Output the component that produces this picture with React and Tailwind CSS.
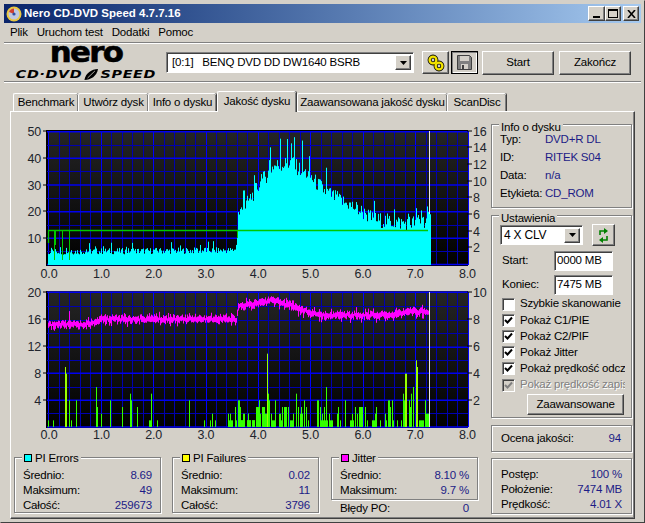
import React from "react";

const rnd = (i) => {
  const x = Math.sin(i * 12.9898) * 43758.5453;
  return x - Math.floor(x);
};

// envelope points, [pixel x, value]
const lerp = (pts, x) => {
  for (let i = 1; i < pts.length; i++) {
    if (x <= pts[i][0]) {
      const [a, b] = pts[i - 1];
      const [c, d] = pts[i];
      return b + ((d - b) * (x - a)) / (c - a);
    }
  }
  return pts[pts.length - 1][1];
};

const pieEnvelope = [
  [48, 5], [236, 5.5], [238, 19], [245, 22], [257, 29], [273, 37], [290, 38], [307, 34], [323, 28],
  [340, 24], [357, 21], [373, 17], [407, 15.5], [430, 17],
];

const jitterEnvelope = [
  [48, 325], [90, 324], [100, 319], [236, 319], [238, 306], [250, 304], [273, 300], [290, 305], [307, 312],
  [323, 315], [373, 315], [390, 315], [407, 311], [430, 312],
];

const left8 = [
  [85, 20], [100, 20], [136, 180], [139, 160], [148, 80], [154, 20], [169, 80], [229, 120], [232, 60], [244, 40],
  [271, 80], [307, 60], [331, 100], [334, 80], [352, 60], [388, 20], [391, 20], [394, 100], [412, 20], [508, 80],
  [553, 20], [571, 20], [577, 40], [586, 20], [625, 40], [628, 20], [631, 40], [634, 20], [637, 20], [646, 60],
  [649, 20], [655, 80], [658, 80], [661, 60], [664, 20], [667, 20], [670, 20], [673, 40], [682, 20], [685, 40],
  [688, 20], [691, 20], [697, 20], [700, 20], [703, 20], [709, 60], [712, 60], [718, 80],
];

const right9 = [
  [0, 20], [3, 20], [6, 20], [9, 40], [21, 20], [24, 40], [27, 20], [30, 20], [36, 20], [39, 20], [42, 20], [48, 60],
  [51, 60], [54, 60], [57, 80], [60, 40], [66, 60], [69, 60], [72, 60], [75, 40], [78, 40], [81, 220], [84, 100],
  [87, 80], [93, 40], [96, 20], [99, 20], [102, 20], [105, 80], [117, 40], [120, 40], [123, 20], [126, 60], [132, 60],
  [135, 60], [138, 60], [144, 60], [150, 20], [153, 20], [156, 20], [160, 40], [169, 100], [175, 60], [180, 40],
  [184, 60], [187, 40], [193, 80], [198, 60], [204, 20], [231, 80], [235, 80], [240, 60], [243, 20], [246, 40],
  [249, 20], [252, 60], [255, 20], [259, 120], [262, 20], [268, 40], [271, 20], [274, 20], [277, 20], [292, 40],
  [295, 60], [301, 20], [316, 80], [331, 20], [334, 20], [337, 40], [340, 20], [346, 60], [352, 40], [358, 60],
  [361, 60], [364, 60], [367, 60], [376, 60], [382, 20], [397, 20], [400, 20], [403, 20], [406, 40], [409, 60],
  [420, 20], [436, 40], [439, 20], [445, 80], [448, 80], [450, 60], [455, 80], [460, 20], [470, 20], [484, 20],
  [490, 100], [493, 80], [496, 160], [499, 160], [508, 80], [511, 60], [514, 100], [520, 120], [529, 200], [532, 180],
  [538, 20], [541, 20], [544, 20], [547, 20], [550, 20], [556, 80], [559, 40], [562, 40], [565, 40], [568, 40],
];

const pifBars = [
  ...left8.map(([x, h]) => [Math.round(20 + x / 3), h / 3]),
  ...right9.map(([x, h]) => [Math.round(240 + x / 3), h / 3]),
];

function Grid({ lines, top, bottom }) {
  const verticals = [];
  for (let i = 0; i <= 40; i++) {
    const x = Math.round(48.3 + i * 10.48) + 0.5;
    verticals.push(
      <line key={i} x1={x} x2={x} y1={top} y2={bottom} stroke={i % 5 === 0 ? "#0000ff" : "#0000b0"} strokeWidth="1" />
    );
  }
  return (
    <g>
      {verticals}
      {lines.map(([y, major]) => (
        <line key={y} x1="47" x2="468" y1={y} y2={y} stroke={major ? "#0000f0" : "#0000b0"} strokeWidth={major ? 1.5 : 1} />
      ))}
    </g>
  );
}

function Labels({ left, right, xLabelY }) {
  const xs = ["0.0", "1.0", "2.0", "3.0", "4.0", "5.0", "6.0", "7.0", "8.0"];
  return (
    <g fontFamily="'Liberation Sans', sans-serif" fontSize="12.5" fill="#20242c">
      {left.map(([t, y]) => (
        <g key={t}>
          <text x="41" y={y + 4.5} textAnchor="end">{t}</text>
          <line x1="43" x2="47" y1={y} y2={y} stroke="#000" />
        </g>
      ))}
      {right.map(([t, y]) => (
        <g key={t}>
          <text x="473" y={y + 4.5}>{t}</text>
          <line x1="467" x2="472" y1={y} y2={y} stroke="#000" />
        </g>
      ))}
      {xs.map((t, i) => (
        <text key={t} x={49 + i * 52.3} y={xLabelY} textAnchor="middle">{t}</text>
      ))}
    </g>
  );
}

function TopChart() {
  const bars = [];
  for (let x = 48; x <= 430; x++) {
    const base = lerp(pieEnvelope, x);
    const high = x > 237;
    let v = base + (rnd(x) - 0.5) * (high ? 6 : 2.4);
    if (rnd(x + 500) > (high ? 0.82 : 0.9)) v += rnd(x + 900) * (high ? 9 : 3.5);
    if (x > 274 && x < 296 && x % 7 === 0) v = 46 + rnd(x) * 3;
    const y = 265 - v * 2.68;
    bars.push(<line key={x} x1={x + 0.5} x2={x + 0.5} y1={y} y2="265" stroke="#00ffff" />);
  }
  return (
    <svg width="470" height="160" viewBox="20 122 470 160" className="block">
      <defs>
        <linearGradient id="topBg" x1="0" y1="0" x2="0" y2="1">
          <stop offset="0" stopColor="#252525" />
          <stop offset="1" stopColor="#000000" />
        </linearGradient>
      </defs>
      <rect x="46" y="130" width="422" height="136" fill="url(#topBg)" />
      <rect x="46" y="130" width="422" height="1.5" fill="#000" />
      <rect x="46" y="130" width="2" height="136" fill="#000" />
      <Grid
        top={131}
        bottom={265}
        lines={[[131.7, 1], [145.5, 0], [158.3, 1], [171.5, 0], [185, 1], [198.5, 0], [211.7, 1], [225.5, 0], [238.3, 1], [251.5, 0], [264.5, 1]]}
      />
      {bars}
      <path d="M48.5 243V230.5H428" fill="none" stroke="#00c800" strokeWidth="1.3" />
      <path d="M54.5 230V260M55.5 230V245M62.5 230V260M69.5 230V260M237.5 230V238" fill="none" stroke="#00c800" />
      <line x1="429.5" x2="429.5" y1="131" y2="214" stroke="#e8e8e8" />
      <Labels
        xLabelY={278}
        left={[["50", 131], ["40", 158], ["30", 185], ["20", 211], ["10", 238]]}
        right={[["16", 131], ["14", 147], ["12", 164], ["10", 181], ["8", 197], ["6", 214], ["4", 231], ["2", 247]]}
      />
    </svg>
  );
}

function BottomChart() {
  const jitter = [];
  for (let x = 48; x <= 428; x++) {
    const c = lerp(jitterEnvelope, x) + (rnd(x + 11) - 0.5) * 2.5;
    let a = 1.5 + rnd(x + 31) * 2.5;
    let b = 1.5 + rnd(x + 77) * 3;
    if (rnd(x + 210) > 0.9) b += 3;
    if (rnd(x + 340) > 0.92) a += 3;
    if (x === 69) a = 14;
    jitter.push(<line key={x} x1={x + 0.5} x2={x + 0.5} y1={c - a} y2={c + b} stroke="#ff00ff" />);
  }
  return (
    <svg width="470" height="157" viewBox="20 285 470 157" className="block">
      <defs>
        <linearGradient id="bottomBg" x1="0" y1="0" x2="0" y2="1">
          <stop offset="0" stopColor="#252525" />
          <stop offset="1" stopColor="#000000" />
        </linearGradient>
      </defs>
      <rect x="46" y="291" width="422" height="137" fill="url(#bottomBg)" />
      <rect x="46" y="291" width="2" height="137" fill="#000" />
      <Grid
        top={292}
        bottom={427}
        lines={[[292.3, 1], [306.5, 0], [320.5, 0], [333.5, 0], [347.2, 1], [360.5, 0], [373.3, 1], [387.5, 0], [400.3, 1], [413.5, 0], [427, 1]]}
      />
      {pifBars.map(([x, h], i) => (
        <line key={i} x1={x + 0.5} x2={x + 0.5} y1={427 - h} y2="427" stroke={h > 45 ? "#99ff00" : "#33ff00"} strokeWidth="1" />
      ))}
      {jitter}
      <line x1="429.5" x2="429.5" y1="292" y2="427" stroke="#e8e8e8" />
      <Labels
        xLabelY={439}
        left={[["20", 292], ["16", 319], ["12", 346], ["8", 373], ["4", 400]]}
        right={[["10", 292], ["8", 319], ["6", 346], ["4", 373], ["2", 400]]}
      />
    </svg>
  );
}

const raised = "border border-t-white border-l-white border-r-[#404040] border-b-[#404040] shadow-[inset_-1px_-1px_0_#808080]";
const sunken = "border border-t-[#808080] border-l-[#808080] border-r-white border-b-white shadow-[inset_1px_1px_0_#404040]";

function Button({ className, children }) {
  return <div className={`${raised} flex items-center justify-center bg-[#d4d0c8] ${className}`}>{children}</div>;
}

function ArrowBtn() {
  return (
    <div className={`${raised} ml-auto flex h-[15px] w-[16px] items-center justify-center bg-[#d4d0c8]`}>
      <svg width="7" height="4" viewBox="0 0 7 4"><path d="M0 0h7L3.5 4z" fill="#000" /></svg>
    </div>
  );
}

function Group({ title, swatch, className, children }) {
  return (
    <div className={`relative border border-[#808080] shadow-[inset_1px_1px_0_#fff,1px_1px_0_#fff] ${className}`}>
      <div className={`absolute left-[7px] flex items-center gap-[3px] bg-[#d4d0c8] pl-[2px] pr-[2px] leading-[14px] ${swatch ? "top-[-7px]" : "top-[-5px]"}`}>
        {swatch && <span className={`h-[8px] w-[8px] border border-black ${swatch}`} />}
        {title}
      </div>
      {children}
    </div>
  );
}

function StatRow({ label, value }) {
  return (
    <div className="flex h-[15.3px] items-center justify-between leading-none">
      <span>{label}</span>
      <span className="text-[#1c1c86]">{value}</span>
    </div>
  );
}

function InfoRow({ label, value }) {
  return (
    <div className="flex h-[18px] items-center leading-none">
      <span className="w-[45px]">{label}</span>
      <span className="text-[#1c1c86]">{value}</span>
    </div>
  );
}

function Check({ label, disabled }) {
  return (
    <div className="flex h-[16.2px] items-center gap-[5px] overflow-hidden whitespace-nowrap leading-none">
      <span className={`${sunken} flex h-[13px] w-[13px] shrink-0 items-center justify-center ${disabled ? "bg-[#d4d0c8]" : "bg-white"}`}>
        {label !== "Szybkie skanowanie" && (
          <svg width="9" height="9" viewBox="0 0 9 9">
            <path d="M1 4l2.5 2.5L8 1.5" fill="none" stroke={disabled ? "#808080" : "#000"} strokeWidth="2" />
          </svg>
        )}
      </span>
      <span className={disabled ? "text-[#808080] [text-shadow:1px_1px_0_#fff]" : ""}>{label}</span>
    </div>
  );
}

function Tab({ label, width, active }) {
  return (
    <div
      className={`flex shrink-0 items-center justify-center whitespace-nowrap rounded-t-[2px] border-l border-t border-white shadow-[inset_-1px_0_0_#808080,1px_0_0_#404040] ${
        active ? "z-10 mx-[1px] mb-[-1px] h-[21px] bg-[#d4d0c8]" : "h-[18px]"
      } ${width}`}
    >
      {label}
    </div>
  );
}

export default function App() {
  return (
    <div className="h-[523px] w-[645px] overflow-hidden border border-t-[#d4d0c8] border-l-[#d4d0c8] border-r-[#404040] border-b-[#404040] bg-[#d4d0c8] p-[3px] font-['Liberation_Sans',sans-serif] text-[11.5px] tracking-[-0.2px] text-black">
      {/* title bar */}
      <div className="flex h-[19px] items-center bg-gradient-to-r from-[#0a246a] to-[#a6caf0] pl-[2px] pr-[2px]">
        <svg width="16" height="16" viewBox="0 0 16 16" className="mr-[2px]">
          <circle cx="8" cy="8" r="7.5" fill="#e8c840" />
          <circle cx="8" cy="8" r="5.5" fill="#c0c8e0" />
          <path d="M8 8L3 6a5.5 5.5 0 0 1 5-3.5z" fill="#d04030" />
          <circle cx="8" cy="8" r="1.6" fill="#3050a0" />
        </svg>
        <span className="text-[11.5px] font-bold leading-none tracking-normal text-white">Nero CD-DVD Speed 4.7.7.16</span>
        <div className="ml-auto flex items-center">
          <div className={`${raised} flex h-[15px] w-[17px] items-end justify-center pb-[2px] bg-[#d4d0c8]`}>
            <span className="h-[2px] w-[7px] bg-black" />
          </div>
          <div className={`${raised} flex h-[15px] w-[16px] items-center justify-center bg-[#d4d0c8]`}>
            <span className="h-[9px] w-[10px] border border-t-2 border-black" />
          </div>
          <div className={`${raised} ml-[2px] flex h-[15px] w-[16px] items-center justify-center bg-[#d4d0c8]`}>
            <svg width="9" height="8" viewBox="0 0 9 8"><path d="M1 0l7 8M8 0L1 8" stroke="#000" strokeWidth="1.6" /></svg>
          </div>
        </div>
      </div>

      {/* menu */}
      <div className="flex h-[19px] items-center gap-[9px] pl-[6px] pt-[1px] leading-none">
        <span>Plik</span>
        <span>Uruchom test</span>
        <span>Dodatki</span>
        <span>Pomoc</span>
      </div>
      <div className="h-[2px] border-t border-b border-t-[#808080] border-b-white" />

      {/* toolbar */}
      <div className="flex h-[37px] items-center">
        <div className="ml-[10px] flex w-[144px] flex-col items-center">
          <span className="mt-[-2px] origin-center scale-x-[1.1] font-['DejaVu_Sans',sans-serif] text-[28px] font-bold leading-[20px] tracking-[-1.5px] [-webkit-text-stroke:0.6px_black]">nero</span>
          <span className="mt-[6px] flex origin-center scale-x-[1.3] items-center whitespace-nowrap font-['DejaVu_Sans',sans-serif] text-[11px] font-bold italic leading-[10px] tracking-[0.5px]">
            CD·DVD
            <svg width="12" height="11" viewBox="0 0 15 11" preserveAspectRatio="none" className="mx-[1px]">
              <path d="M1 11C2 4 8 0 14 0 13 7 7 11 1 11z" fill="#000" />
              <path d="M4 9L11 2" stroke="#d4d0c8" strokeWidth="0.8" />
            </svg>
            SPEED
          </span>
        </div>
        <div className={`${sunken} ml-[8px] flex h-[21px] w-[248px] items-center bg-white pl-[5px] pr-[2px] leading-none`}>
          <span className="whitespace-pre">{"[0:1]   BENQ DVD DD DW1640 BSRB"}</span>
          <ArrowBtn />
        </div>
        <Button className="ml-[8px] h-[23px] w-[27px]">
          <svg width="18" height="18" viewBox="0 0 18 18">
            <g fill="none">
              <circle cx="6" cy="6" r="3.4" stroke="#000" strokeWidth="4" />
              <circle cx="12" cy="12" r="3.4" stroke="#000" strokeWidth="4" />
              <circle cx="6" cy="6" r="3.4" stroke="#f4e400" strokeWidth="2.4" />
              <circle cx="12" cy="12" r="3.4" stroke="#f4e400" strokeWidth="2.4" />
            </g>
          </svg>
        </Button>
        <div className="ml-[2px] flex h-[23px] w-[27px] items-center justify-center border border-black bg-[#d4d0c8] shadow-[inset_1px_1px_0_#808080,inset_-1px_-1px_0_#fff]">
          <svg width="15" height="15" viewBox="0 0 15 15">
            <path d="M0.5 0.5h12l2 2v12h-14z" fill="#808080" stroke="#404040" />
            <rect x="3" y="1" width="9" height="5" fill="#d4d0c8" />
            <rect x="4" y="9" width="7" height="5" fill="#d4d0c8" />
            <rect x="5" y="10" width="2" height="4" fill="#404040" />
          </svg>
        </div>
        <Button className="ml-[4px] h-[24px] w-[72px]">Start</Button>
        <Button className="ml-[5px] h-[24px] w-[72px]">Zakończ</Button>
      </div>
      <div className="h-[2px] border-t border-b border-t-[#808080] border-b-white" />

      {/* tabs */}
      <div className="mt-[8px] flex h-[20px] items-end pl-[9px] leading-none">
        <Tab label="Benchmark" width="w-[65px]" />
        <Tab label="Utwórz dysk" width="w-[70px]" />
        <Tab label="Info o dysku" width="w-[68px]" />
        <Tab label="Jakość dysku" width="w-[79px]" active />
        <Tab label="Zaawansowana jakość dysku" width="w-[150px]" />
        <Tab label="ScanDisc" width="w-[59px]" />
      </div>

      {/* tab panel */}
      <div className="ml-[6px] flex h-[408px] w-[625px] border border-t-white border-l-white border-r-[#404040] border-b-[#404040] shadow-[inset_-1px_-1px_0_#808080] pl-[3px]">
        <div className="w-[477px] pt-[10px]">
          <div className="ml-[6px]">
            <TopChart />
            <div className="mt-[3px]">
              <BottomChart />
            </div>
          </div>
          <div className="mt-[15px] flex gap-[11px] leading-none">
            <Group title="PI Errors" swatch="bg-[#00ffff]" className="h-[56px] w-[147px] px-[8px] pt-[10px]">
              <StatRow label="Średnio:" value="8.69" />
              <StatRow label="Maksimum:" value="49" />
              <StatRow label="Całość:" value="259673" />
            </Group>
            <Group title="PI Failures" swatch="bg-[#ffff00]" className="h-[56px] w-[147px] px-[8px] pt-[10px]">
              <StatRow label="Średnio:" value="0.02" />
              <StatRow label="Maksimum:" value="11" />
              <StatRow label="Całość:" value="3796" />
            </Group>
            <div className="ml-[1px] w-[147px]">
              <Group title="Jitter" swatch="bg-[#ff00ff]" className="h-[43px] px-[8px] pt-[10px]">
                <StatRow label="Średnio:" value="8.10 %" />
                <StatRow label="Maksimum:" value="9.7 %" />
              </Group>
              <div className="mt-[1px] px-[9px]">
                <StatRow label="Błędy PO:" value="0" />
              </div>
            </div>
          </div>
        </div>

        {/* right column */}
        <div className="w-[141px] pt-[12px]">
          <Group title="Info o dysku" className="h-[84px] pl-[8px] pt-[6px]">
            <InfoRow label="Typ:" value="DVD+R DL" />
            <InfoRow label="ID:" value="RITEK S04" />
            <InfoRow label="Data:" value="n/a" />
            <InfoRow label="Etykieta:" value="CD_ROM" />
          </Group>
          <Group title="Ustawienia" className="mt-[7px] h-[203px] pl-[8px] pt-[8px]">
            <div className="flex items-center">
              <div className={`${sunken} flex h-[20px] w-[83px] items-center bg-white pl-[3px] pr-[2px] text-[12px] leading-none`}>
                4 X CLV
                <ArrowBtn />
              </div>
              <Button className="ml-[9px] h-[22px] w-[23px]">
                <svg width="13" height="15" viewBox="0 0 13 15">
                  <path d="M3 7V3h4" fill="none" stroke="#008000" strokeWidth="1.6" />
                  <path d="M7 0l4 3-4 3z" fill="#008000" />
                  <path d="M10 8v4H6" fill="none" stroke="#008000" strokeWidth="1.6" />
                  <path d="M6 9l-4 3 4 3z" fill="#008000" />
                </svg>
              </Button>
            </div>
            <div className="mt-[5px] flex items-center pl-[2px] leading-none">
              <span className="w-[52px]">Start:</span>
              <div className={`${sunken} flex h-[20px] w-[59px] items-center bg-white pl-[2px]`}>0000 MB</div>
            </div>
            <div className="mt-[4px] flex items-center pl-[2px] leading-none">
              <span className="w-[52px]">Koniec:</span>
              <div className={`${sunken} flex h-[20px] w-[59px] items-center bg-white pl-[2px]`}>7475 MB</div>
            </div>
            <div className="mt-[1px] w-[125px] pl-[2px]">
              <Check label="Szybkie skanowanie" />
              <Check label="Pokaż C1/PIE" />
              <Check label="Pokaż C2/PIF" />
              <Check label="Pokaż Jitter" />
              <Check label="Pokaż prędkość odczytu" />
              <Check label="Pokaż prędkość zapisu" disabled />
            </div>
            <Button className="ml-[27px] mt-[1px] h-[21px] w-[97px] leading-none">Zaawansowane</Button>
          </Group>
          <div className="mt-[7px] flex h-[27px] items-center justify-between border border-[#808080] px-[9px] pt-[1px] leading-none shadow-[inset_1px_1px_0_#fff,1px_1px_0_#fff]">
            <span>Ocena jakości:</span>
            <span className="mr-[1px] text-[#1c1c86]">94</span>
          </div>
          <div className="mt-[6px] h-[56px] border border-[#808080] px-[9px] pt-[8px] leading-none shadow-[inset_1px_1px_0_#fff,1px_1px_0_#fff]">
            <StatRow label="Postęp:" value="100 %" />
            <StatRow label="Położenie:" value="7474 MB" />
            <StatRow label="Prędkość:" value="4.01 X" />
          </div>
        </div>
      </div>
    </div>
  );
}
